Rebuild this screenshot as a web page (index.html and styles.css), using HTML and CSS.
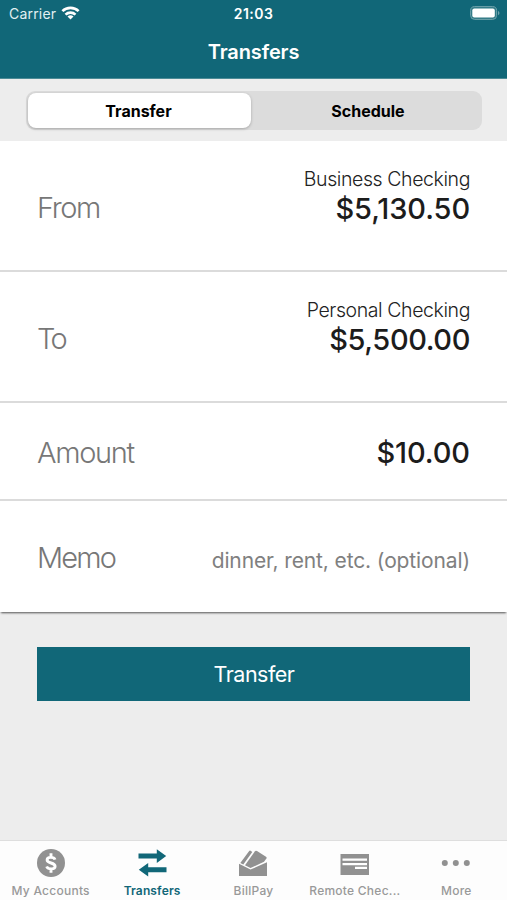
FILE: index.html
```html
<!DOCTYPE html>
<html lang="en">
<head>
<meta charset="utf-8">
<title>Transfers</title>
<link rel="stylesheet" href="styles.css">
</head>
<body>
<div class="app">
  <header class="header">
    <div class="status">
      <div class="carrier"><span>Carrier</span>
        <svg width="19" height="14" viewBox="0 0 18 14" fill="none" stroke="#fff" stroke-width="2.6"><path d="M.9 5.2C5.3.7 12.7.7 17.1 5.2M4 8.6C6.8 5.9 11.2 5.9 14 8.6"/><path d="M9 13.6 6 10.6Q9 8.1 12 10.6Z" fill="#fff" stroke="none"/></svg>
      </div>
      <time class="time">21:03</time>
      <svg class="battery" width="30" height="14" viewBox="0 0 30 14"><rect x=".6" y=".6" width="26" height="12.8" rx="4" fill="#2f7985" stroke="#6fa3ac"/><rect x="2.3" y="2.5" width="22.5" height="9" rx="2" fill="#fff"/><path d="M28 4.7q3 2.3 0 4.6z" fill="#6fa3ac"/></svg>
    </div>
    <h1 class="title">Transfers</h1>
  </header>
  <div class="segment-bar">
    <div class="segments">
      <button class="segment segment-active">Transfer</button>
      <button class="segment">Schedule</button>
    </div>
  </div>
  <main class="form">
    <section class="row row-account">
      <span class="label label-from">From</span>
      <div class="account"><span class="account-name">Business Checking</span><span class="money from-money">$5,130.50</span></div>
    </section>
    <section class="row row-account">
      <span class="label label-to">To</span>
      <div class="account"><span class="account-name">Personal Checking</span><span class="money to-money">$5,500.00</span></div>
    </section>
    <section class="row row-amount">
      <span class="label label-amount">Amount</span>
      <span class="money amount-money">$10.00</span>
    </section>
    <section class="row row-memo">
      <span class="label label-memo">Memo</span>
      <span class="hint">dinner, rent, etc. (optional)</span>
    </section>
  </main>
  <button class="submit">Transfer</button>
  <nav class="tabs">
    <a class="tab">
      <svg width="32" height="32" viewBox="0 0 32 32"><circle cx="16" cy="16" r="14" fill="#919191"/><path d="M20 12.6C19 9.7 12.1 9.4 12.1 13c0 3.8 8 2.2 8 6.2 0 3.6-7 3.5-8.5.3M16 6.3v3.5M16 22v3.7" fill="none" stroke="#fff" stroke-width="2.9"/></svg>
      <span>My Accounts</span>
    </a>
    <a class="tab tab-active">
      <svg width="32" height="32" viewBox="0 0 32 32" fill="#116778"><path d="M2.5 6.5h18.3V2.2L30.2 9.1l-9.4 6.9v-4.5H2.5zM30.5 20.2H12.2v-4.3l-9.4 6.9 9.4 6.8v-4.4h18.3z"/></svg>
      <span>Transfers</span>
    </a>
    <a class="tab">
      <svg width="32" height="32" viewBox="0 0 32 32" fill="#919191"><path d="M2 16.8 13.5 22.6 30 15.2V29H2z"/><path d="M3.3 16 12.2 4q.6-.8 1.4-.2l1.7 1.2L6.3 17.5z"/><path d="M8 18.3 17.8 4.4q.9-1.2 2.2-.4l9 5.7q1 .7.4 1.7L27 14.7 13.5 21.1z"/></svg>
      <span>BillPay</span>
    </a>
    <a class="tab">
      <svg width="32" height="32" viewBox="0 0 32 32"><path d="M1.5 7h28.5v21H1.5z" fill="#919191"/><path d="M3.5 12.6H28M3.5 17.1H28M16 20.9h12" stroke="#fff" stroke-width="2.3"/></svg>
      <span>Remote Chec...</span>
    </a>
    <a class="tab">
      <svg width="32" height="32" viewBox="0 0 32 32" fill="#919191"><circle cx="4.8" cy="16" r="3"/><circle cx="15.8" cy="16" r="3"/><circle cx="26.8" cy="16" r="3"/></svg>
      <span>More</span>
    </a>
  </nav>
</div>
</body>
</html>
```
FILE: styles.css
```css
* { box-sizing: border-box; }
body { margin: 0; font-family: Inter, "Liberation Sans", sans-serif; }
button { border: 0; padding: 0; font-family: inherit; }
.app { width: 507px; height: 900px; display: flex; flex-direction: column; background: #ededed; overflow: hidden; }
.header { height: 79px; flex: none; background: #116778; color: #fff; border-bottom: 1px solid #4c8b96; }
.status { height: 28px; padding: 0 7px 0 9px; display: grid; grid-template-columns: 1fr auto 1fr; align-items: center; }
.carrier { display: flex; align-items: center; gap: 5px; font-size: 14px; letter-spacing: .2px; color: #e2f0f2; height: 18px; margin-top: -1px; }
.carrier svg { margin-top: -1px; }
.time { font-size: 14px; font-weight: 600; letter-spacing: .45px; margin: -1px 0 0 -2px; }
.battery { justify-self: end; margin-top: -2px; }
.title { margin: 0; height: 49px; line-height: 49px; text-align: center; font-size: 20px; font-weight: 600; letter-spacing: -.1px; }
.segment-bar { height: 62px; flex: none; padding: 12px 25px 11px 26px; }
.segments { height: 39px; display: grid; grid-template-columns: 225px 1fr; background: #dcdcdc; border-radius: 9px; }
.segment { background: none; font-size: 16px; font-weight: 650; letter-spacing: 0; color: #000; padding-left: 3px; }
.segment-active { margin: 2px 0 2px 2px; padding: 0 2px 0 0; background: #fff; border-radius: 8px; box-shadow: 0 1px 3px rgba(0,0,0,.25); }
.form { flex: none; background: #fff; box-shadow: 0 2px 2px -1px rgba(0,0,0,.65); }
.row { display: flex; align-items: center; justify-content: space-between; padding: 0 37px; border-bottom: 2px solid #dbdbdb; }
.row-account { height: 131px; }
.row-amount { height: 98px; }
.row-memo { height: 111px; border: 0; }
.label { font-size: 29px; font-weight: 300; color: #777; margin-top: 4px; }
.label-from { letter-spacing: -1.4px; }
.label-to { letter-spacing: -2.6px; }
.label-amount { letter-spacing: -1.35px; margin-top: 2px; }
.label-memo { letter-spacing: -1.85px; margin-top: 1px; }
.account { display: flex; flex-direction: column; align-items: flex-end; margin-top: -20px; }
.account-name { font-size: 19.5px; line-height: 27px; font-weight: 300; color: #222; letter-spacing: -.41px; }
.money { font-size: 29px; line-height: 32px; font-weight: 500; color: #1c1c1c; }
.from-money { letter-spacing: -.1px; }
.to-money { letter-spacing: -.4px; }
.amount-money { letter-spacing: -.1px; margin-top: 3px; }
.hint { font-size: 21px; font-weight: 400; color: #808080; letter-spacing: -.12px; margin-top: 8px; }
.submit { flex: none; width: 433px; height: 54px; margin: 35px 0 0 37px; padding-left: 1px; background: #116778; color: #fff; font-size: 21.5px; letter-spacing: -.5px; }
.tabs { height: 60px; flex: none; margin-top: auto; display: grid; grid-template-columns: repeat(5, 1fr); background: #fdfdfd; border-top: 1px solid #dedede; }
.tab { display: flex; flex-direction: column; align-items: center; padding-top: 6px; color: #999; font-size: 12px; line-height: 18px; font-weight: 450; letter-spacing: .25px; white-space: nowrap; }
.tab svg { flex: none; margin-bottom: 3px; }
.tab-active { color: #116778; font-weight: 600; letter-spacing: .15px; }
```
